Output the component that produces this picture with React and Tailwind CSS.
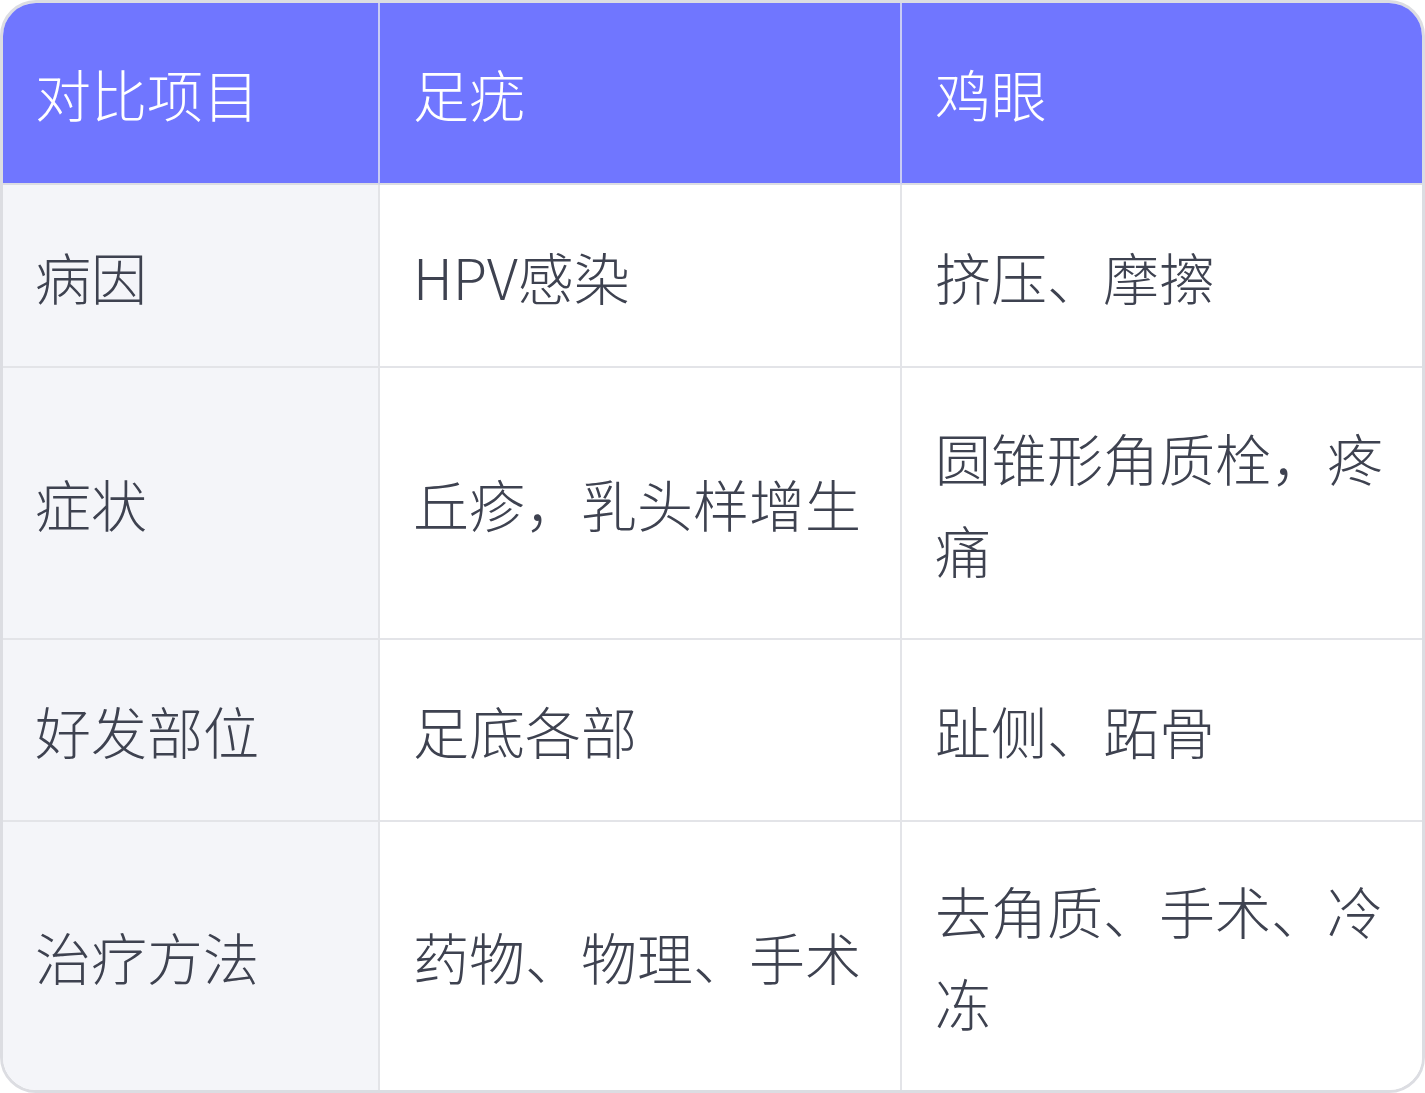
import React from 'react';

const rows = [
  { item: '病因', wart: 'HPV感染', corn: '挤压、摩擦' },
  { item: '症状', wart: '丘疹，乳头样增生', corn: '圆锥形角质栓，疼痛' },
  { item: '好发部位', wart: '足底各部', corn: '趾侧、跖骨' },
  { item: '治疗方法', wart: '药物、物理、手术', corn: '去角质、手术、冷冻' },
];

const font = { fontFamily: '"Noto Sans CJK SC", "Noto Sans", sans-serif' };

const App = () => {
  return (
    <div className="bg-white w-[1425px] h-[1093px]" style={font}>
      <div className="w-[1425px] rounded-[36px] border-[3px] border-[#dcdde2] overflow-hidden">
        <div className="grid grid-cols-[377px_522px_1fr] grid-rows-[182px_183px_272px_182px_268px] text-[56px] leading-[92px] font-light">
          {/* Header */}
          <div className="bg-[#7076ff] text-white pl-[32px] pr-[33px] flex items-center border-r-2 border-r-[#c9cbf5] border-b-2 border-b-[#dcdde2]">对比项目</div>
          <div className="bg-[#7076ff] text-white px-[33px] flex items-center border-r-2 border-r-[#c9cbf5] border-b-2 border-b-[#dcdde2]">足疣</div>
          <div className="bg-[#7076ff] text-white px-[33px] flex items-center border-b-2 border-b-[#dcdde2]">鸡眼</div>

          {rows.map((r, i) => {
            const last = i === rows.length - 1;
            const bottom = last ? '' : 'border-b-2 border-[#e3e4e8]';
            return (
              <React.Fragment key={r.item}>
                <div className={`bg-[#f4f5f9] text-[#3e4250] pl-[32px] pr-[33px] flex items-center border-r-2 border-r-[#e3e4e8] ${bottom}`}>
                  {r.item}
                </div>
                <div className={`bg-white text-[#3e4250] px-[33px] flex items-center border-r-2 border-r-[#e3e4e8] ${bottom}`}>
                  {r.wart}
                </div>
                <div className={`bg-white text-[#3e4250] px-[33px] flex items-center ${bottom}`}>
                  {r.corn}
                </div>
              </React.Fragment>
            );
          })}
        </div>
      </div>
    </div>
  );
};

export default App;
